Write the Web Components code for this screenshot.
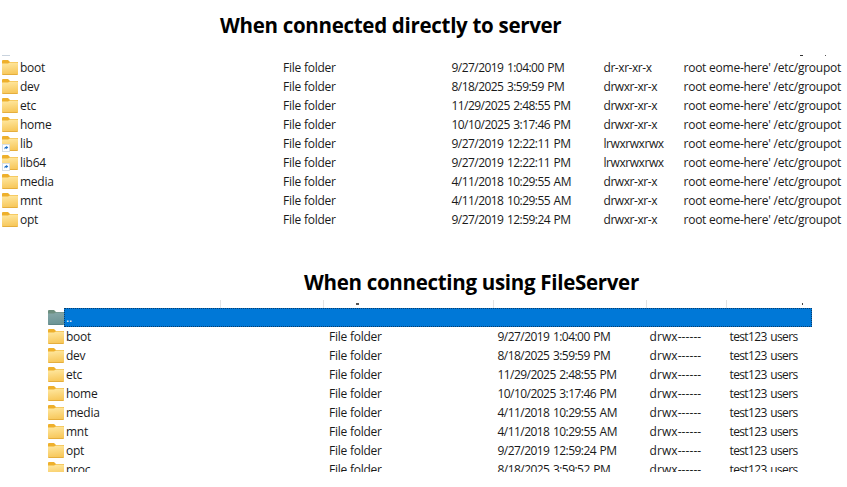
<!DOCTYPE html>
<html>
<head>
<meta charset="utf-8">
<title>File listings</title>
<style>
    html, body { margin: 0; background: #fff; }
    body { width: 847px; height: 487px; overflow: hidden; font-family: "Open Sans", "Liberation Sans", sans-serif; }
    #direct { --perm-spacing: -0.44px; --owner-spacing: -0.24px; --owner-word: 0; }
    #server { --perm-spacing: 0.08px; --owner-spacing: -0.62px; --owner-word: 1px; }
</style>
</head>
<body>
<listing-title indent="220" height="50" line="50"><span>When connected directly to server</span></listing-title>
<file-list id="direct" indent="2" wide="845" height="179" cap="8"></file-list>
<listing-title indent="304" height="44" line="52" gap="27"><span>When connecting using FileServer</span></listing-title>
<file-list id="server" indent="48" wide="764" height="172" cap="8"></file-list>

<script>
class FolderIcon extends HTMLElement {

    constructor() {
        super();
        this.shadow = this.attachShadow({mode: 'open'});
    }

    connectedCallback() {
        let kind = this.getAttribute("kind") || "plain";
        let back = kind == "parent" ? "#6d8f7f" : "#eeb02c";
        let top = kind == "parent" ? "#86a8a8" : "#ffe9a3";
        let bottom = kind == "parent" ? "#6c9494" : "#f7c75a";
        let link = kind == "link" ? `
            <rect x="0.5" y="8.5" width="7" height="7" fill="#fff" stroke="#d5dde5"/>
            <path d="M2.5 13.5 L2.5 12 Q2.5 10.8 4.2 10.8 L4.2 9.8 L6.3 11.5 L4.2 13.2 L4.2 12.2 Q3.2 12.2 2.5 13.5Z" fill="#1f6fc4"/>` : "";
        this.shadow.innerHTML =
        /*html*/
        `
        <style>
            :host{ display:block; width:16px; height:19px; flex:none; }
            svg{ display:block; }
        </style>
        <svg width="16" height="19" viewBox="0 0 16 19" xmlns="http://www.w3.org/2000/svg">
            <defs>
                <linearGradient id="f" x1="0" y1="0" x2="0.15" y2="1">
                    <stop offset="0" stop-color="${top}"/>
                    <stop offset="1" stop-color="${bottom}"/>
                </linearGradient>
            </defs>
            <g transform="translate(0 2)">
                <path d="M0 1 Q0 0 1 0 L6 0 L8 2 L16 2 L16 4 L0 4Z" fill="${back}"/>
                <path d="M0 3.5 L6 3.5 L8 2.5 L15.5 2.5 Q16 2.5 16 3 L16 14 Q16 15 15 15 L1 15 Q0 15 0 14Z" fill="url(#f)"/>
                <path d="M0.5 14.5 L15.5 14.5" stroke="${kind == "parent" ? "#5f8585" : "#e5ae3d"}"/>
                ${link}
            </g>
        </svg>
        `;
    }
}

class FileRow extends HTMLElement {

    constructor() {
        super();
        this.shadow = this.attachShadow({mode: 'open'});
    }

    connectedCallback() {
        let selected = this.hasAttribute("selected");
        this.shadow.innerHTML =
        /*html*/
        `
        <style>
            :host{ display:flex; height:19px; font-size:12px; color:#1a1a1a; }
            .cells{
                flex:1;
                min-width:0;
                display:grid;
                grid-template-columns:263px 168.5px 152px 80px 1fr;
                align-items:center;
                padding-left:2px;
                box-sizing:border-box;
                line-height:19px;
                white-space:nowrap;
                letter-spacing:-0.24px;
            }
            .cells.selected{
                background:#0078d7;
                color:#fff;
                outline:1px dotted #0b3d6b;
                outline-offset:-1px;
            }
            .date{ letter-spacing:-0.55px; word-spacing:1px; }
            .perm{ letter-spacing:var(--perm-spacing); }
            .owner{ letter-spacing:var(--owner-spacing); word-spacing:var(--owner-word); }
        </style>
        <folder-icon kind="${this.getAttribute("kind") || "plain"}"></folder-icon>
        <div class="cells ${selected ? "selected" : ""}">
            <span>${this.getAttribute("name")}</span>
            <span>${this.getAttribute("type") || ""}</span>
            <span class="date">${this.getAttribute("date") || ""}</span>
            <span class="perm">${this.getAttribute("perm") || ""}</span>
            <span class="owner">${this.getAttribute("owner") || ""}</span>
        </div>
        `;
    }
}

class ListingTitle extends HTMLElement {

    constructor() {
        super();
        this.shadow = this.attachShadow({mode: 'open'});
    }

    connectedCallback() {
        this.shadow.innerHTML =
        /*html*/
        `
        <style>
            :host{
                display:block;
                box-sizing:border-box;
                padding-left:${this.getAttribute("indent")}px;
                margin-top:${this.getAttribute("gap") || 0}px;
                height:${this.getAttribute("height")}px;
                line-height:${this.getAttribute("line")}px;
                font-size:20.5px;
                font-weight:700;
                color:#000;
                white-space:nowrap;
                letter-spacing:-0.3px;
            }
        </style>
        <slot></slot>
        `;
    }
}

class FileList extends HTMLElement {

    constructor() {
        super();
        this.shadow = this.attachShadow({mode: 'open'});
    }

    connectedCallback() {
        this.shadow.innerHTML =
        /*html*/
        `
        <style>
            :host{
                display:block;
                margin-left:${this.getAttribute("indent")}px;
                width:${this.getAttribute("wide")}px;
                height:${this.getAttribute("height")}px;
                overflow:hidden;
            }
            svg{ display:block; }
        </style>
        <svg class="cap" width="${this.getAttribute("wide")}" height="${this.getAttribute("cap")}"></svg>
        <div class="rows"></div>
        `;
    }

    // marks left over from the cropped column header
    setCap(marks) {
        let cap = this.shadow.querySelector(".cap");
        cap.innerHTML = marks.map(m =>
            `<rect x="${m[0]}" y="${m[1]}" width="${m[2]}" height="${m[3]}" fill="${m[4]}"/>`).join("");
    }

    setRows(rows) {
        let holder = this.shadow.querySelector(".rows");
        rows.forEach(data => {
            let row = document.createElement("file-row");
            Object.keys(data).forEach(key => row.setAttribute(key, data[key]));
            holder.appendChild(row);
        });
    }
}

customElements.define('folder-icon', FolderIcon);
customElements.define('file-row', FileRow);
customElements.define('listing-title', ListingTitle);
customElements.define('file-list', FileList);

const GROUPOT = "root eome-here' /etc/groupot";
const OWNER = "test123 users";

function directRow(name, date, perm, kind) {
    return {name, type: "File folder", date, perm, owner: GROUPOT, kind: kind || "plain"};
}

function serverRow(name, date) {
    return {name, type: "File folder", date, perm: "drwx------", owner: OWNER};
}

let direct = document.getElementById("direct");
direct.setCap([
    [0, 5, 8, 1, "#c9d3de"],
    [798, 5, 3, 1, "#333"],
    [823, 5, 1, 1, "#555"]
]);
direct.setRows([
    directRow("boot", "9/27/2019 1:04:00 PM", "dr-xr-xr-x"),
    directRow("dev", "8/18/2025 3:59:59 PM", "drwxr-xr-x"),
    directRow("etc", "11/29/2025 2:48:55 PM", "drwxr-xr-x"),
    directRow("home", "10/10/2025 3:17:46 PM", "drwxr-xr-x"),
    directRow("lib", "9/27/2019 12:22:11 PM", "lrwxrwxrwx", "link"),
    directRow("lib64", "9/27/2019 12:22:11 PM", "lrwxrwxrwx", "link"),
    directRow("media", "4/11/2018 10:29:55 AM", "drwxr-xr-x"),
    directRow("mnt", "4/11/2018 10:29:55 AM", "drwxr-xr-x"),
    directRow("opt", "9/27/2019 12:59:24 PM", "drwxr-xr-x")
]);

let server = document.getElementById("server");
server.setCap([
    [172, 0, 1, 8, "#e3e3e3"],
    [275, 0, 1, 8, "#e3e3e3"],
    [445, 0, 1, 8, "#e3e3e3"],
    [598, 0, 1, 8, "#e3e3e3"],
    [678, 0, 1, 8, "#e3e3e3"],
    [308, 3, 3, 2, "#555"],
    [754, 3, 1, 2, "#444"]
]);
server.setRows([
    {name: "..", kind: "parent", selected: ""},
    serverRow("boot", "9/27/2019 1:04:00 PM"),
    serverRow("dev", "8/18/2025 3:59:59 PM"),
    serverRow("etc", "11/29/2025 2:48:55 PM"),
    serverRow("home", "10/10/2025 3:17:46 PM"),
    serverRow("media", "4/11/2018 10:29:55 AM"),
    serverRow("mnt", "4/11/2018 10:29:55 AM"),
    serverRow("opt", "9/27/2019 12:59:24 PM"),
    serverRow("proc", "8/18/2025 3:59:52 PM")
]);
</script>
</body>
</html>
